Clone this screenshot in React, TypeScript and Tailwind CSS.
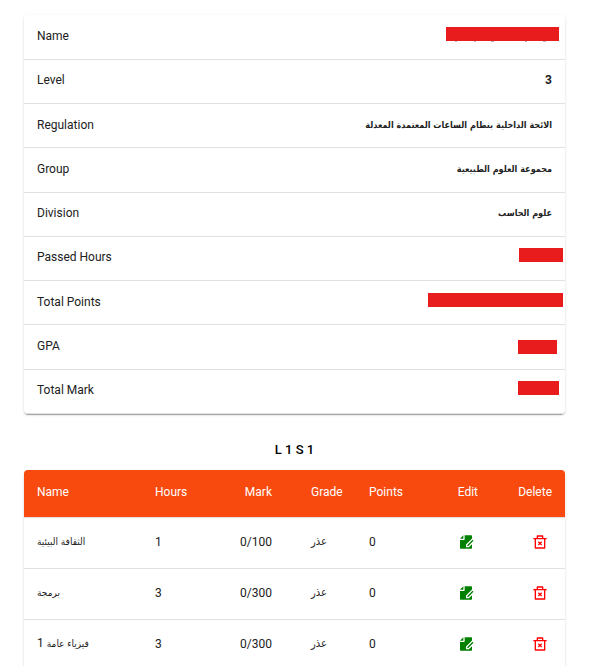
import { RiDeleteBin2Line, RiFileEditFill } from "react-icons/ri";

type Detail = {
  label: string;
  value?: string;
  arabic?: boolean;
  bar?: string;
  inset?: string;
  traces?: boolean;
};

const details: Detail[] = [
  { label: "Name", bar: "w-[113px]", inset: "pr-1.5 pb-1.5", traces: true },
  { label: "Level", value: "3" },
  { label: "Regulation", value: "الائحة الداخلية بنظام الساعات المعتمدة المعدلة", arabic: true },
  { label: "Group", value: "مجموعة العلوم الطبيعية", arabic: true },
  { label: "Division", value: "علوم الحاسب", arabic: true },
  { label: "Passed Hours", bar: "w-11", inset: "pr-0.5 pb-1.5" },
  { label: "Total Points", bar: "w-[135px]", inset: "pr-0.5 pb-1.5" },
  { label: "GPA", bar: "w-[39px]", inset: "pr-2 pb-0" },
  { label: "Total Mark", bar: "w-[41px]", inset: "pr-1.5 pb-1.5" },
];

const courses = [
  { name: "الثقافة البيئية", part: "", hours: 1, mark: "0/100", grade: "عذر", points: 0 },
  { name: "برمجة", part: "", hours: 3, mark: "0/300", grade: "عذر", points: 0 },
  { name: "فيزياء عامة", part: "1", hours: 3, mark: "0/300", grade: "عذر", points: 0 },
];

const card =
  "rounded-[4px] shadow-[0_2px_1px_-1px_rgba(0,0,0,0.2),0_1px_1px_0_rgba(0,0,0,0.14),0_1px_3px_0_rgba(0,0,0,0.12)]";

const arabicFont = "align-[1px] leading-none font-['DejaVu_Sans_Condensed','DejaVu_Sans',sans-serif]";

// Descender tips of the hidden name that show below its bar.
function InkTraces() {
  return (
    <svg viewBox="0 0 113 2" className="absolute top-full left-0 h-0.5 w-full" aria-hidden="true">
      <path
        d="M10 0v1M29 0v1M45 0h3M79 0h2M97 0h3"
        stroke="#8a5a6a"
        strokeWidth="1"
        fill="none"
      />
    </svg>
  );
}

function DetailsTable() {
  return (
    <div className={card}>
      <table className="h-[399px] w-full border-collapse">
        <tbody>
          {details.map((d) => (
            <tr key={d.label} className="h-11 border-b border-[#e0e0e0]">
              <th scope="row" className="px-[13px] pt-0 pb-0.5 text-left font-normal">
                {d.label}
              </th>
              {d.bar ? (
                <td className={`pt-0 ${d.inset}`}>
                  <span
                    role="img"
                    aria-label={`${d.label} hidden`}
                    className={`relative ml-auto block h-3.5 bg-[#e81c1c] ${d.bar}`}
                  >
                    {d.traces && <InkTraces />}
                  </span>
                </td>
              ) : (
                <td className="px-[13px] pt-0 pb-0.5 text-right font-bold">
                  {d.arabic ? (
                    <span dir="rtl" lang="ar" className={`text-[9px] ${arabicFont}`}>
                      {d.value}
                    </span>
                  ) : (
                    d.value
                  )}
                </td>
              )}
            </tr>
          ))}
        </tbody>
      </table>
    </div>
  );
}

function CoursesTable() {
  return (
    <div className={`overflow-hidden ${card}`}>
      <table className="w-full table-fixed border-collapse" aria-labelledby="term">
        <colgroup>
          <col className="w-[118px]" />
          <col className="w-[78px]" />
          <col className="w-[78px]" />
          <col className="w-[58px]" />
          <col className="w-[74px]" />
          <col className="w-[61px]" />
          <col className="w-[74px]" />
        </colgroup>
        <thead>
          <tr className="h-[47px] border-b border-[#e0e0e0] bg-[#f84a0f] text-white *:px-[13px] *:pb-0.5 *:font-normal">
            <th scope="col" className="text-left">Name</th>
            <th scope="col" className="text-left">Hours</th>
            <th scope="col" className="pr-[26px]! text-right">Mark</th>
            <th scope="col" className="text-left">Grade</th>
            <th scope="col" className="text-left">Points</th>
            <th scope="col" className="text-right">Edit</th>
            <th scope="col" className="text-right">Delete</th>
          </tr>
        </thead>
        <tbody>
          {courses.map((c) => (
            <tr key={c.name} className="h-[51px] border-b border-[#e0e0e0] *:px-[13px] *:pb-0.5">
              <td className="whitespace-nowrap">
                <bdi lang="ar" className={`text-[10px] ${arabicFont}`}>
                  {c.name}
                  {c.part && <span className="font-[Roboto,sans-serif] text-xs"> {c.part}</span>}
                </bdi>
              </td>
              <td>{c.hours}</td>
              <td className="pr-[26px]! text-right">{c.mark}</td>
              <td>
                <bdi lang="ar" className={`text-[11px] ${arabicFont}`}>{c.grade}</bdi>
              </td>
              <td>{c.points}</td>
              <td className="text-right">
                <button type="button" aria-label={`Edit ${c.name}`} className="p-1 align-middle text-[#008000]">
                  <RiFileEditFill className="size-4" />
                </button>
              </td>
              <td className="text-right">
                <button type="button" aria-label={`Delete ${c.name}`} className="p-1 align-middle text-[#ff0000]">
                  <RiDeleteBin2Line className="size-4" />
                </button>
              </td>
            </tr>
          ))}
        </tbody>
      </table>
    </div>
  );
}

export default function App() {
  return (
    <main className="bg-white pt-[15px] pr-[37px] pl-6 font-[Roboto,'DejaVu_Sans',sans-serif] text-xs text-[#212121]">
      <DetailsTable />
      <h2 id="term" className="pt-[26px] pb-2.5 text-center text-[13px] leading-5 font-medium text-black">
        L 1 S 1
      </h2>
      <CoursesTable />
    </main>
  );
}
